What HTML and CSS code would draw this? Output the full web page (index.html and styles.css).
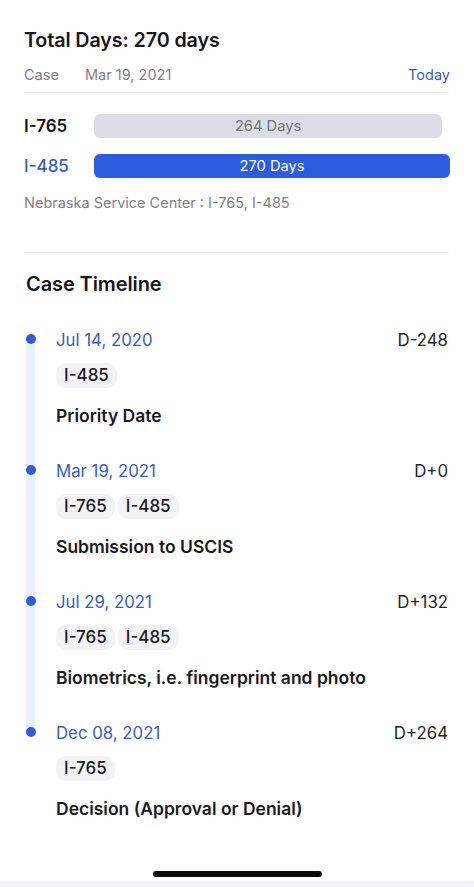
FILE: index.html
```html
<!DOCTYPE html>
<html lang="en">
<head>
<meta charset="utf-8">
<title>Case Timeline</title>
<link rel="stylesheet" href="styles.css">
</head>
<body>
<div class="page">
  <section class="summary">
    <h1 class="title">Total Days: 270 days</h1>
    <div class="case-row">
      <span class="case-label">Case</span>
      <span class="case-date">Mar 19, 2021</span>
      <span class="case-today">Today</span>
    </div>
    <div class="bars">
      <div class="bar-row">
        <span class="bar-label">I-765</span>
        <div class="bar-track">
          <div class="bar bar-gray" style="width: 97.78%">264 Days</div>
        </div>
      </div>
      <div class="bar-row">
        <span class="bar-label bar-label-blue">I-485</span>
        <div class="bar-track">
          <div class="bar bar-blue" style="width: 100%">270 Days</div>
        </div>
      </div>
    </div>
    <p class="center">Nebraska Service Center : I-765, I-485</p>
  </section>

  <section class="timeline-section">
    <h2 class="title section-title">Case Timeline</h2>
    <ol class="timeline">
      <li class="entry">
        <span class="dot"></span>
        <div class="entry-head"><span class="entry-date">Jul 14, 2020</span><span class="entry-day">D-248</span></div>
        <div class="tags"><span class="tag">I-485</span></div>
        <div class="entry-title">Priority Date</div>
      </li>
      <li class="entry">
        <span class="dot"></span>
        <div class="entry-head"><span class="entry-date">Mar 19, 2021</span><span class="entry-day">D+0</span></div>
        <div class="tags"><span class="tag">I-765</span><span class="tag">I-485</span></div>
        <div class="entry-title">Submission to USCIS</div>
      </li>
      <li class="entry">
        <span class="dot"></span>
        <div class="entry-head"><span class="entry-date">Jul 29, 2021</span><span class="entry-day">D+132</span></div>
        <div class="tags"><span class="tag">I-765</span><span class="tag">I-485</span></div>
        <div class="entry-title">Biometrics, i.e. fingerprint and photo</div>
      </li>
      <li class="entry">
        <span class="dot"></span>
        <div class="entry-head"><span class="entry-date">Dec 08, 2021</span><span class="entry-day">D+264</span></div>
        <div class="tags"><span class="tag">I-765</span></div>
        <div class="entry-title">Decision (Approval or Denial)</div>
      </li>
    </ol>
  </section>

  <footer class="footer">
    <div class="home-indicator"></div>
    <div class="bottom-strip"></div>
  </footer>
</div>
</body>
</html>
```
FILE: styles.css
```css
* { box-sizing: border-box; }
html, body { margin: 0; padding: 0; background: #ffffff; }
body {
  font-family: "Inter", "Noto Sans", "Liberation Sans", sans-serif;
  color: #1a1a1f;
}
.page {
  width: 474px;
  min-height: 887px;
  display: flex;
  flex-direction: column;
}
.summary { padding: 28px 24px 0 24px; }
.title {
  margin: 0;
  font-size: 19.7px;
  line-height: 24px;
  font-weight: 600;
  color: #16161a;
  letter-spacing: -0.1px;
}
.case-row {
  margin-top: 13px;
  display: flex;
  align-items: center;
  height: 20px;
  font-size: 14.5px;
  line-height: 20px;
  box-sizing: content-box;
  padding-bottom: 7px;
  border-bottom: 1px solid #ececf0;
}
.case-label { width: 61px; color: #808089; }
.case-date { color: #808089; flex: 1; }
.case-today { color: #3a5ac4; }
.bars {
  margin-top: 21px;
  display: flex;
  flex-direction: column;
  gap: 16px;
}
.bar-row { display: flex; align-items: center; height: 24px; }
.bar-label {
  width: 70px;
  font-size: 17px;
  font-weight: 600;
  color: #16161a;
}
.bar-label-blue { color: #3a5ac4; font-weight: 500; }
.bar-track { flex: 1; }
.bar {
  height: 24px;
  border-radius: 6px;
  display: flex;
  align-items: center;
  justify-content: center;
  font-size: 14.7px;
}
.bar-gray { background: #dcdce6; color: #74747c; }
.bar-blue { background: #2c5ce0; color: #ffffff; }
.center {
  margin: 15px 0 0 0;
  font-size: 14.5px;
  line-height: 20px;
  color: #808089;
}
.timeline-section {
  margin: 39px 24px 0 24px;
  border-top: 1px solid #ececf0;
  padding-top: 19px;
}
.section-title { padding-left: 2px; font-size: 20px; }
.timeline {
  list-style: none;
  margin: 33px 0 0 0;
  padding: 0 2px 0 32px;
  position: relative;
  display: flex;
  flex-direction: column;
  gap: 33px;
}
.timeline::before {
  content: "";
  position: absolute;
  left: 2px;
  top: 11px;
  bottom: 87px;
  width: 9px;
  background: #eaf0fd;
}
.entry { position: relative; }
.dot {
  position: absolute;
  left: -30px;
  top: 5px;
  width: 10px;
  height: 10px;
  border-radius: 50%;
  background: #2c5ce0;
}
.entry-head {
  display: flex;
  justify-content: space-between;
  align-items: center;
  height: 22px;
  font-size: 16.8px;
  line-height: 22px;
}
.entry-date { color: #3a5ac4; }
.entry-day { color: #1f1f24; }
.tags {
  margin-top: 12px;
  display: flex;
  gap: 3px;
}
.tag {
  height: 25px;
  padding: 0 8px;
  border-radius: 10px;
  background: #f3f3f6;
  font-size: 17px;
  font-weight: 500;
  line-height: 25px;
  color: #1a1a1f;
}
.entry-title {
  margin-top: 17px;
  font-size: 17.5px;
  line-height: 22px;
  font-weight: 600;
  color: #1a1a1f;
}
.footer {
  margin-top: auto;
  display: flex;
  flex-direction: column;
  align-items: center;
}
.home-indicator {
  width: 169px;
  height: 6px;
  border-radius: 3px;
  background: #0a0a0a;
}
.bottom-strip {
  margin-top: 4px;
  width: 100%;
  height: 6px;
  background: #f2f3fa;
}
```
